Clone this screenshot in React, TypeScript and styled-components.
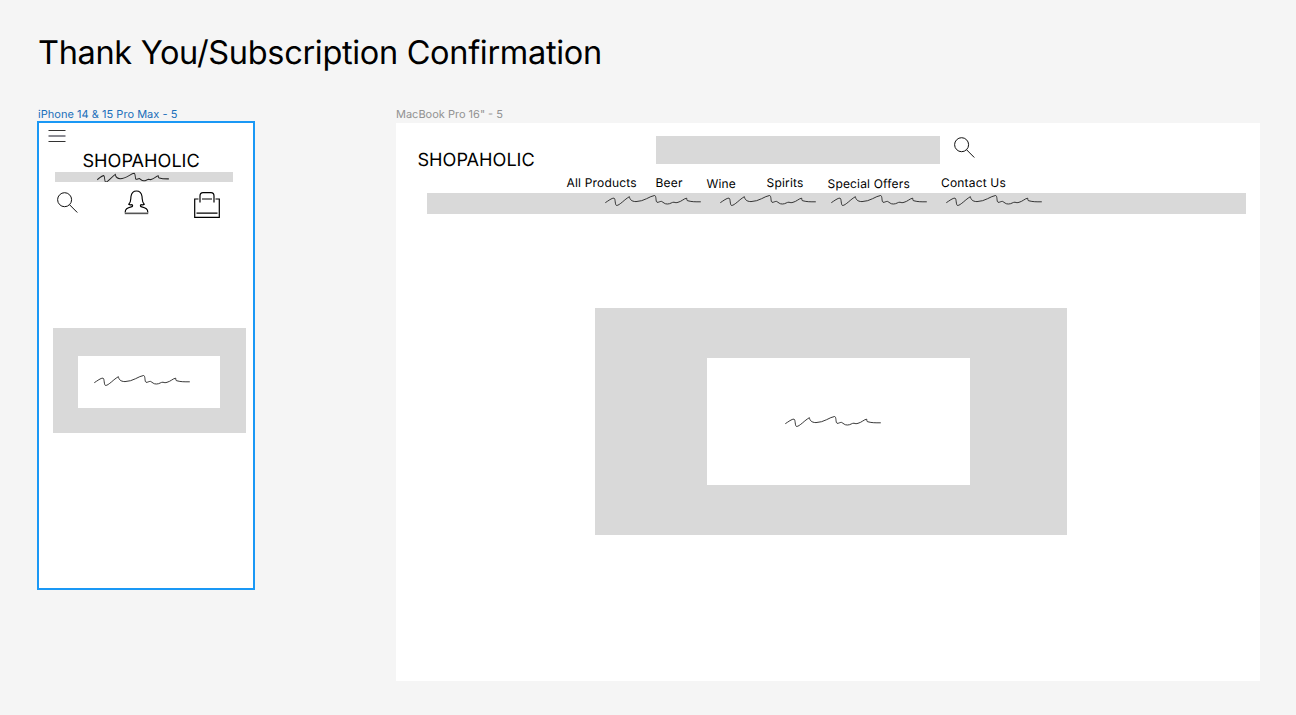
import React from "react";
import styled, { createGlobalStyle } from "styled-components";

const GlobalStyle = createGlobalStyle`
  *, *::before, *::after { box-sizing: border-box; }
  body {
    margin: 0;
    background: #f5f5f5;
    color: #000;
    font-family: Inter, "Liberation Sans", sans-serif;
    text-rendering: geometricPrecision;
  }
  svg { display: block; flex: none; }
`;

const Canvas = styled.main`
  width: 1296px;
  height: 715px;
  padding: 32px 36px 0 37px;
  background: #f5f5f5;
  overflow: hidden;
`;

const Title = styled.h1`
  margin: 0 0 0 1px;
  height: 40px;
  font-size: 32.5px;
  line-height: 41px;
  font-weight: 400;
  letter-spacing: -0.32px;
  white-space: nowrap;
`;

const Frames = styled.div`
  display: flex;
  justify-content: space-between;
  align-items: flex-start;
  margin-top: 35px;
`;

const FrameLabel = styled.div<{ $selected?: boolean }>`
  height: 14px;
  margin-left: ${(p) => (p.$selected ? "1px" : "0")};
  font-size: 11px;
  line-height: 14px;
  letter-spacing: ${(p) => (p.$selected ? "0.03px" : "0")};
  white-space: nowrap;
  color: ${(p) => (p.$selected ? "#1a6fba" : "#929292")};
`;

const PhoneFrame = styled.section`
  width: 218px;
  height: 469px;
  border: 2px solid #1a98f5;
  background: #fff;
`;

const DesktopFrame = styled.section`
  width: 864px;
  height: 558px;
  margin-top: 2px;
  background: #fff;
`;

const Brand = styled.div`
  height: 22px;
  font-size: 18.1px;
  line-height: 23px;
  white-space: nowrap;
`;

const MenuRow = styled.div`
  height: 27px;
  padding: 6px 0 0 9px;
`;

const PhoneBrand = styled(Brand)`
  margin-left: 43.5px;
  line-height: 22px;
`;

const PhoneBanner = styled.div`
  width: 178px;
  height: 10px;
  margin: 0 0 0 15.5px;
  padding-left: 42.5px;
  background: #d9d9d9;
  overflow: hidden;
`;

const PhoneActions = styled.div`
  display: flex;
  justify-content: space-between;
  align-items: flex-start;
  height: 28px;
  margin: 8px 33px 0 18px;
`;

const ActionSlot = styled.span<{ $top: number }>`
  padding-top: ${(p) => p.$top}px;
`;

const Panel = styled.div<{ $w: number; $h: number; $pad: string }>`
  width: ${(p) => p.$w}px;
  height: ${(p) => p.$h}px;
  padding: ${(p) => p.$pad};
  background: #d9d9d9;
`;

const PhonePanel = styled(Panel)`
  margin: 110px 0 0 14px;
`;

const DesktopPanel = styled(Panel)`
  margin: 93.6px 0 0 199px;
`;

const Message = styled.div<{ $w: number; $h: number; $pad: string }>`
  width: ${(p) => p.$w}px;
  height: ${(p) => p.$h}px;
  padding: ${(p) => p.$pad};
  background: #fff;
`;

const DesktopHeader = styled.header`
  display: flex;
  height: 53px;
  padding: 13px 0 0 21.5px;
`;

const DesktopBrand = styled(Brand)`
  width: 238px;
  margin-top: 13px;
`;

const SearchField = styled.div`
  width: 284.5px;
  height: 28px;
  margin-right: 14px;
  background: #d9d9d9;
`;

const SearchButton = styled.span`
  padding-top: 1px;
`;

const Nav = styled.nav`
  display: grid;
  grid-template-columns: 89px 51px 60px 61px 113.5px 90px;
  height: 17px;
  padding-left: 170.5px;
`;

const NavItem = styled.a<{ $drop?: boolean }>`
  height: 15px;
  margin-top: ${(p) => (p.$drop ? "0" : "-1px")};
  font-size: 12px;
  line-height: 15px;
  letter-spacing: 0.18px;
  white-space: nowrap;
`;

const DesktopBanner = styled.div`
  display: grid;
  grid-template-columns: 115px 111.5px 115px 100px;
  width: 819px;
  height: 21.4px;
  margin-left: 31px;
  padding: 1.4px 0 0 177.5px;
  background: #d9d9d9;
`;

const Squiggle = ({ width = 96, height = 12 }: { width?: number; height?: number }) => (
  <svg
    width={width}
    height={height}
    viewBox="0 0 96 12"
    preserveAspectRatio="none"
    fill="none"
    stroke="#222"
    strokeWidth={0.9 * (96 / width)}
  >
    <path d="M.3 8.700C3 7 7 3.800 9 4.100C10.600 4.500 9.800 11.300 11.600 11.500C14.500 11.500 20 5 24.400 2.700C24.800 5 26 7.500 31 7.600C39 7.500 45 2 49.500 1.500C51.500 1.500 50.500 7.500 52 8.300C54 8.500 54.500 7.300 56.500 7.400C58.500 8.300 59.500 10.200 62.500 10C65.500 10 67 8 69 8.200C70.500 8.800 71.500 8.800 73 8.300C76.500 7.500 79 4.500 81.700 4.200C82 5.500 81.500 6.700 83 6.800C87 7.900 90 7.800 95.800 7.800" />
  </svg>
);

const SearchIcon = () => (
  <svg width="22" height="22" viewBox="0 0 22 22" fill="none" stroke="#111" strokeWidth="1">
    <circle cx="7.600" cy="7.700" r="7" />
    <path d="M12.500 12.700L20.300 20.500" />
  </svg>
);

const MenuIcon = () => (
  <svg width="18" height="14" viewBox="0 0 18 14" fill="none" stroke="#333" strokeWidth="1">
    <path d="M.5 1.500H17.500M.5 12.500H17.500" />
    <path d="M.5 7H17.500" stroke="#8b8b93" strokeWidth="2" />
  </svg>
);

const PersonIcon = () => (
  <svg width="25" height="25" viewBox="0 0 26 26" fill="none" stroke="#000" strokeWidth="1.200">
    <path d="M1.200 23.500C1.200 19.500 3 18.800 8.300 17.300C9.300 16.700 9 15.700 8.300 15.200C6.500 15.700 5.500 15.300 5 14.800C7.500 12.500 6.800 10 7.300 6.500C7.900 2.700 10 1 13 1C16 1 18.100 2.700 18.700 6.500C19.200 10 18.500 12.500 21 14.800C20.500 15.300 19.500 15.700 17.700 15.200C17 15.700 16.700 16.700 17.700 17.300C23 18.800 24.800 19.500 24.800 23.500" />
    <path d="M.8 24.300H25.200" stroke="#555" strokeWidth="1.700" />
  </svg>
);

const BagIcon = () => (
  <svg width="26" height="26" viewBox="0 0 26 26" fill="none" stroke="#000" strokeWidth="1.200">
    <path d="M4.500 7H.7V25.300H25.300V7H21.500M8 7H18" />
    <path d="M6 10.500V4C6 1.800 7 .7 9 .7H17C19 .7 20 1.800 20 4V10.500M2.500 21.200H23.500" />
  </svg>
);

const navItems: { label: string; drop?: boolean }[] = [
  { label: "All Products" },
  { label: "Beer" },
  { label: "Wine", drop: true },
  { label: "Spirits" },
  { label: "Special Offers", drop: true },
  { label: "Contact Us" },
];

export default function App() {
  return (
    <Canvas>
      <GlobalStyle />
      <Title>Thank You/Subscription Confirmation</Title>
      <Frames>
        <div>
          <FrameLabel $selected>iPhone 14 &amp; 15 Pro Max - 5</FrameLabel>
          <PhoneFrame>
            <MenuRow>
              <MenuIcon />
            </MenuRow>
            <PhoneBrand>SHOPAHOLIC</PhoneBrand>
            <PhoneBanner>
              <Squiggle width={72} height={10.6} />
            </PhoneBanner>
            <PhoneActions>
              <ActionSlot $top={2}>
                <SearchIcon />
              </ActionSlot>
              <ActionSlot $top={0}>
                <PersonIcon />
              </ActionSlot>
              <ActionSlot $top={2}>
                <BagIcon />
              </ActionSlot>
            </PhoneActions>
            <PhonePanel $w={193} $h={105} $pad="27.500px 0 0 25px">
              <Message $w={142} $h={52.5} $pad="18.500px 0 0 16px">
                <Squiggle />
              </Message>
            </PhonePanel>
          </PhoneFrame>
        </div>
        <div>
          <FrameLabel>MacBook Pro 16" - 5</FrameLabel>
          <DesktopFrame>
            <DesktopHeader>
              <DesktopBrand>SHOPAHOLIC</DesktopBrand>
              <SearchField />
              <SearchButton>
                <SearchIcon />
              </SearchButton>
            </DesktopHeader>
            <Nav>
              {navItems.map((item) => (
                <NavItem key={item.label} $drop={item.drop}>
                  {item.label}
                </NavItem>
              ))}
            </Nav>
            <DesktopBanner>
              <Squiggle />
              <Squiggle />
              <Squiggle />
              <Squiggle />
            </DesktopBanner>
            <DesktopPanel $w={472} $h={227} $pad="50px 0 0 111.500px">
              <Message $w={263.5} $h={126.6} $pad="57px 0 0 78px">
                <Squiggle />
              </Message>
            </DesktopPanel>
          </DesktopFrame>
        </div>
      </Frames>
    </Canvas>
  );
}
